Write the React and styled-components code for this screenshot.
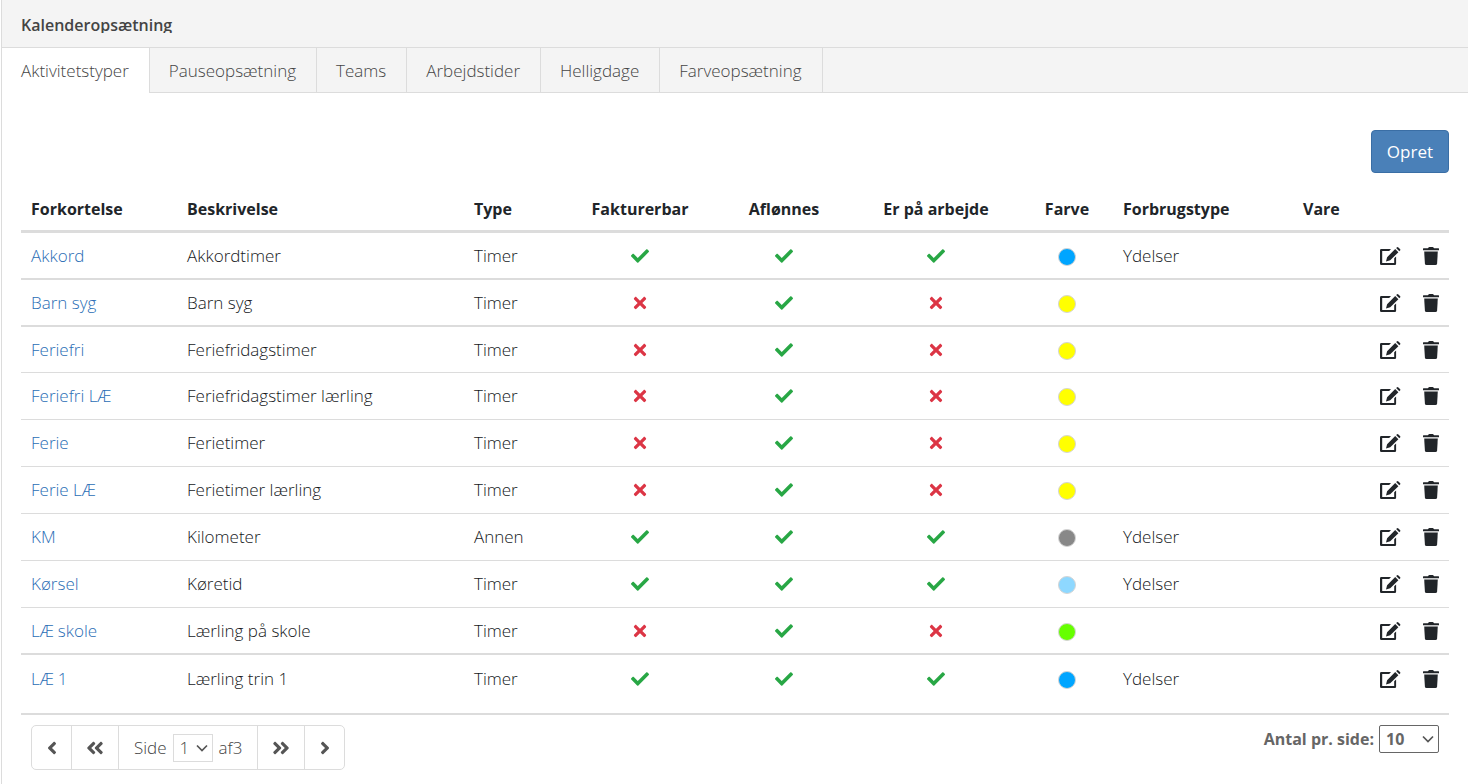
import styled, { createGlobalStyle } from "styled-components";
import {
  FaAngleDoubleLeft,
  FaAngleDoubleRight,
  FaAngleLeft,
  FaAngleRight,
  FaCheck,
  FaTimes,
} from "react-icons/fa";

const GlobalStyle = createGlobalStyle`
* {
  box-sizing: border-box;
}
body {
  margin: 0;
  background-color: white;
  color: #15181b;
  font-family: "Open Sans", "Noto Sans", sans-serif;
  font-size: 17px;
  font-weight: 300;
  line-height: 24px;
}
button, select {
  font: inherit;
  color: inherit;
}
`

const Page = styled.div`
margin-left: 1px;
min-height: 100vh;
border-left: 1px solid #dcdcdc;
`

const Header = styled.header`
height: 48px;
padding: 13px 19px 0;
background-color: #f4f4f4;
border-bottom: 1px solid #dcdcdc;
`

const Title = styled.h1`
margin: 0;
height: 20px;
overflow: hidden;
font-size: 16px;
font-weight: 600;
color: #444;
`

const Tabs = styled.nav`
display: flex;
background-color: #f4f4f4;
box-shadow: inset 0 -1px #dcdcdc;
`

const Tab = styled.button`
height: 45px;
padding: 0 20px 0 19px;
border: 0;
border-right: 1px solid #dcdcdc;
background-color: ${(props) => (props.$active ? "white" : "transparent")};
color: #444;
cursor: pointer;
`

const Content = styled.main`
padding: 37px 19px 14px;
`

const Toolbar = styled.div`
display: flex;
justify-content: flex-end;
margin-bottom: 12px;
`

const CreateButton = styled.button`
height: 43px;
padding: 1px 15px 0;
border: 1px solid #3a6ea5;
border-radius: 4px;
background-color: #4a80b8;
color: white;
font-weight: 400;
cursor: pointer;
`

const Table = styled.table`
width: 100%;
table-layout: fixed;
border-collapse: separate;
border-spacing: 0;
`

const Col = styled.col`
width: ${(props) => props.$width};
`

const Th = styled.th`
height: 48px;
padding: 2px 10px 0;
border-bottom: 3px solid #dcdcdc;
font-size: 16px;
font-weight: 700;
color: #212529;
text-align: ${(props) => (props.$center ? "center" : "left")};
white-space: nowrap;
`

const Td = styled.td`
height: ${(props) => props.$height || 47}px;
padding: 0 10px;
border-bottom: ${(props) => props.$line}px solid #dcdcdc;
text-align: ${(props) => (props.$center ? "center" : "left")};
white-space: nowrap;

svg {
  display: block;
  margin: 0 auto;
}
`

const NameLink = styled.a`
color: #2a6db5;
text-decoration: none;
`

const Dot = styled.span`
display: inline-block;
width: 18px;
height: 18px;
border: 1px solid #d5d5d5;
border-radius: 50%;
background-color: ${(props) => props.$color};
vertical-align: middle;
`

const Actions = styled.div`
display: flex;
justify-content: flex-end;
gap: 22px;
`

const IconButton = styled.button`
display: flex;
padding: 0;
border: 0;
background: none;
cursor: pointer;
`

const Footer = styled.footer`
display: flex;
justify-content: space-between;
align-items: flex-start;
padding: 10px 10px 0;
border-top: 2px solid #dcdcdc;
margin-top: 11px;
color: #444;
`

const Pager = styled.div`
display: flex;
height: 45px;
border: 1px solid #dcdcdc;
border-radius: 5px;
`

const PagerButton = styled.button`
display: flex;
align-items: center;
justify-content: center;
width: ${(props) => (props.$wide ? 46 : 39)}px;
padding: 0;
border: 0;
background: none;
color: #555;
cursor: pointer;
`

const PageLabel = styled.label`
display: flex;
align-items: center;
gap: 6px;
padding: 0 15px;
border: solid #dcdcdc;
border-width: 0 1px;
`

const Divider = styled.span`
width: 1px;
background-color: #dcdcdc;
`

const SelectBox = styled.span`
display: inline-grid;
align-items: center;

select, svg {
  grid-area: 1 / 1;
}
svg {
  justify-self: end;
  margin-right: 5px;
  pointer-events: none;
}
`

const Select = styled.select`
appearance: none;
width: ${(props) => (props.$large ? 60 : 40)}px;
height: 28px;
padding: 0 6px;
border: 1px solid ${(props) => (props.$large ? "#666" : "#dcdcdc")};
border-radius: ${(props) => (props.$large ? 2 : 0)}px;
background-color: white;
`

const PageSize = styled.label`
display: flex;
align-items: center;
gap: 5px;
font-size: 16px;
font-weight: 700;
color: #666;
`

const columns = [
  { label: "Forkortelse", width: "156px" },
  { label: "Beskrivelse", width: "auto" },
  { label: "Type", width: "99px" },
  { label: "Fakturerbar", width: "154px", center: true },
  { label: "Aflønnes", width: "134px", center: true },
  { label: "Er på arbejde", width: "170px", center: true },
  { label: "Farve", width: "92px", center: true },
  { label: "Forbrugstype", width: "180px" },
  { label: "Vare", width: "56px" },
  { label: "", width: "100px" },
]

const rows = [
  { name: "Akkord", text: "Akkordtimer", type: "Timer", billable: true, paid: true, working: true, color: "#00a5ff", usage: "Ydelser", line: 2 },
  { name: "Barn syg", text: "Barn syg", type: "Timer", billable: false, paid: true, working: false, color: "#ffff00", line: 2 },
  { name: "Feriefri", text: "Feriefridagstimer", type: "Timer", billable: false, paid: true, working: false, color: "#ffff00", line: 1, height: 46 },
  { name: "Feriefri LÆ", text: "Feriefridagstimer lærling", type: "Timer", billable: false, paid: true, working: false, color: "#ffff00", line: 1 },
  { name: "Ferie", text: "Ferietimer", type: "Timer", billable: false, paid: true, working: false, color: "#ffff00", line: 1 },
  { name: "Ferie LÆ", text: "Ferietimer lærling", type: "Timer", billable: false, paid: true, working: false, color: "#ffff00", line: 1 },
  { name: "KM", text: "Kilometer", type: "Annen", billable: true, paid: true, working: true, color: "#888888", usage: "Ydelser", line: 1 },
  { name: "Kørsel", text: "Køretid", type: "Timer", billable: true, paid: true, working: true, color: "#8ed8ff", usage: "Ydelser", line: 1 },
  { name: "LÆ skole", text: "Lærling på skole", type: "Timer", billable: false, paid: true, working: false, color: "#66ff00", line: 2 },
  { name: "LÆ 1", text: "Lærling trin 1", type: "Timer", billable: true, paid: true, working: true, color: "#00a5ff", usage: "Ydelser", line: 0 },
]

const tabs = ["Aktivitetstyper", "Pauseopsætning", "Teams", "Arbejdstider", "Helligdage", "Farveopsætning"]

const Mark = ({ on }) => (on ? <FaCheck size={18} color="#28a745" /> : <FaTimes size={18} color="#dc3545" />)

const EditIcon = () => (
  <svg width="21" height="18" viewBox="0 0 21 18" fill="#212529">
    <path d="M1.200 2H11L9.200 3.900H2.200v12h12v-4.600l1.900-1.900v7.400q0 1.200-1.200 1.200H1.200Q0 18 0 16.800V3.200Q0 2 1.200 2z" />
    <path d="M15.200 2l3.200 3.200-8.200 8.100-4.200 1.200 1.100-4.300zM16.100 1.100l.7-.7q.8-.8 1.600 0l1.600 1.600q.8.800 0 1.600l-.7.700z" />
  </svg>
)

const TrashIcon = () => (
  <svg width="16" height="18" viewBox="0 0 16 18" fill="#212529">
    <path d="M.5 1.300h4.300L5.500.4Q5.800 0 6.300 0h3.400q.5 0 .8.400l.7.900h4.300q.5 0 .5.500v1.400H0V1.800q0-.5.500-.5z" />
    <path d="M1.200 4.500h13.600l-.7 12q-.1 1.500-1.600 1.500h-9q-1.500 0-1.600-1.500z" />
  </svg>
)

const Chevron = () => (
  <svg width="12" height="8" viewBox="0 0 12 8" fill="none" stroke="#555" strokeWidth="1.700">
    <path d="M1 1.500l5 5 5-5" />
  </svg>
)

export default function App() {
  return (
    <>
      <GlobalStyle />
      <Page>
        <Header>
          <Title>Kalenderopsætning</Title>
        </Header>
        <Tabs>
          {tabs.map((tab, i) => (
            <Tab key={tab} $active={i === 0}>{tab}</Tab>
          ))}
        </Tabs>
        <Content>
          <Toolbar>
            <CreateButton>Opret</CreateButton>
          </Toolbar>
          <Table>
            <colgroup>
              {columns.map((col) => <Col key={col.label} $width={col.width} />)}
            </colgroup>
            <thead>
              <tr>
                {columns.map((col) => <Th key={col.label} $center={col.center}>{col.label}</Th>)}
              </tr>
            </thead>
            <tbody>
              {rows.map((row) => {
                const cell = { $line: row.line, $height: row.height }
                return (
                  <tr key={row.name}>
                    <Td {...cell}><NameLink href="#">{row.name}</NameLink></Td>
                    <Td {...cell}>{row.text}</Td>
                    <Td {...cell}>{row.type}</Td>
                    <Td {...cell} $center><Mark on={row.billable} /></Td>
                    <Td {...cell} $center><Mark on={row.paid} /></Td>
                    <Td {...cell} $center><Mark on={row.working} /></Td>
                    <Td {...cell} $center><Dot $color={row.color} /></Td>
                    <Td {...cell}>{row.usage}</Td>
                    <Td {...cell}></Td>
                    <Td {...cell}>
                      <Actions>
                        <IconButton aria-label="Rediger"><EditIcon /></IconButton>
                        <IconButton aria-label="Slet"><TrashIcon /></IconButton>
                      </Actions>
                    </Td>
                  </tr>
                )
              })}
            </tbody>
          </Table>
          <Footer>
            <Pager>
              <PagerButton aria-label="Forrige"><FaAngleLeft size={20} /></PagerButton>
              <Divider />
              <PagerButton $wide aria-label="Første"><FaAngleDoubleLeft size={20} /></PagerButton>
              <PageLabel>
                Side
                <SelectBox>
                  <Select defaultValue="1">
                    <option>1</option>
                    <option>2</option>
                    <option>3</option>
                  </Select>
                  <Chevron />
                </SelectBox>
                af3
              </PageLabel>
              <PagerButton $wide aria-label="Sidste"><FaAngleDoubleRight size={20} /></PagerButton>
              <Divider />
              <PagerButton aria-label="Næste"><FaAngleRight size={20} /></PagerButton>
            </Pager>
            <PageSize>
              Antal pr. side:
              <SelectBox>
                <Select $large defaultValue="10">
                  <option>10</option>
                  <option>25</option>
                  <option>50</option>
                </Select>
                <Chevron />
              </SelectBox>
            </PageSize>
          </Footer>
        </Content>
      </Page>
    </>
  )
}
